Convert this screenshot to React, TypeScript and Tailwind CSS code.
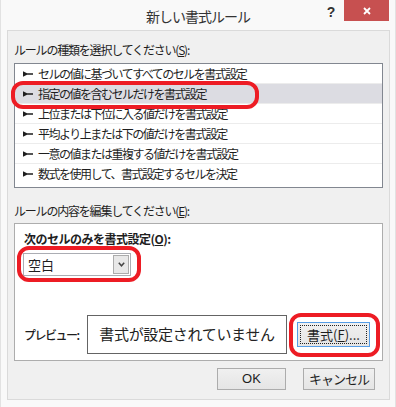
import React from 'react';

const rules = [
  'セルの値に基づいてすべてのセルを書式設定',
  '指定の値を含むセルだけを書式設定',
  '上位または下位に入る値だけを書式設定',
  '平均より上または下の値だけを書式設定',
  '一意の値または重複する値だけを書式設定',
  '数式を使用して、書式設定するセルを決定',
];

function RuleArrow() {
  return (
    <svg width="10" height="6" viewBox="0 0 10 6" className="shrink-0">
      <polygon points="0,0.3 4,2.2 10,2.2 10,3.8 4,3.8 0,5.7" fill="#1e1e1e" />
    </svg>
  );
}

function Button({ children, className = '' }: { children: React.ReactNode; className?: string }) {
  return (
    <div
      className={`flex items-center justify-center border border-[#acacac] bg-gradient-to-b from-[#f0f0f0] to-[#e5e5e5] text-[13px] ${className}`}
    >
      {children}
    </div>
  );
}

export default function App() {
  return (
    <div className="relative w-[396px] h-[407px] overflow-hidden bg-[#f9f9f9] border-x border-[#e2e2e2] font-['Noto_Sans_CJK_JP',sans-serif] text-[#1e1e1e]">
      {/* Title bar */}
      <div className="relative h-[30px] flex items-center justify-center">
        <span className="text-[14px] tracking-[-1px] text-[#333] leading-none mt-[1px]">新しい書式ルール</span>
        <div className="absolute top-0 right-[6px] flex items-start">
          <span className="w-[22px] mt-[4px] mr-[2px] text-center text-[14px] font-bold leading-[16px] text-[#333] font-['Liberation_Sans',sans-serif]">
            ?
          </span>
          <div className="w-[45px] h-[21px] bg-[#c75050] flex items-center justify-center">
            <svg width="8" height="8" viewBox="0 0 8 8">
              <path d="M1 1 L7 7 M7 1 L1 7" stroke="#fff" strokeWidth="1.8" />
            </svg>
          </div>
        </div>
      </div>

      {/* Content area */}
      <div className="ml-[6px] w-[383px] h-[370px] border border-[#dadada] bg-[#f0f0f0] px-[6px]">
        <div className="mt-[11px] h-[16px] leading-[16px] text-[12px] tracking-[-1.2px]">
          ルールの種類を選択してください(<span className="underline">S</span>):
        </div>

        {/* Rule type list */}
        <div className="mt-[5px] h-[125px] border border-[#828790] bg-white">
          {rules.map((r, i) => (
            <div
              key={r}
              className={`h-[20px] flex items-center gap-[5px] pl-[8px] text-[12px] tracking-[-1.5px] leading-none ${
                i === 1 ? 'bg-[#dcdce2]' : ''
              } ${i < rules.length - 1 ? 'border-b border-[#ececec]' : ''}`}
            >
              <RuleArrow />
              <span>{r}</span>
            </div>
          ))}
        </div>

        <div className="mt-[15px] h-[16px] leading-[16px] text-[12px] tracking-[-1.2px]">
          ルールの内容を編集してください(<span className="underline">E</span>):
        </div>

        {/* Rule description panel */}
        <div className="mt-[4px] h-[138px] border border-[#adadad] bg-white px-[9px]">
          <div className="mt-[7px] h-[16px] leading-[16px] text-[12px] font-bold tracking-[-0.5px]">
            次のセルのみを書式設定(<span className="underline">O</span>):
          </div>
          <div className="mt-[6px] -ml-[1px] w-[108px] h-[23px] border border-[#abadb3] bg-white flex items-center justify-between pl-[4px] pr-[1px]">
            <span className="text-[13px] leading-none">空白</span>
            <div className="w-[16px] h-[19px] border border-[#acacac] bg-[#e8e8e8] flex items-center justify-center">
              <svg width="7" height="5" viewBox="0 0 7 5">
                <path d="M0.8 0.8 L3.5 3.8 L6.2 0.8" stroke="#444" strokeWidth="1.5" fill="none" />
              </svg>
            </div>
          </div>

          <div className="mt-[39px] h-[39px] flex items-center">
            <span className="w-[63px] text-[12px] tracking-[-1.5px] font-medium">プレビュー:</span>
            <div className="w-[200px] h-[39px] border border-[#646464] bg-white flex items-center justify-center text-[15px] tracking-[-0.3px] text-[#222]">
              書式が設定されていません
            </div>
            <div className="ml-[10px] w-[73px] h-[25px] border border-[#569de5] bg-gradient-to-b from-[#f0f0f0] to-[#e5e5e5] p-[2px]">
              <div className="h-full border border-dotted border-[#222] flex items-center justify-center text-[13px] leading-none">
                書式(<span className="underline">F</span>)...
              </div>
            </div>
          </div>
        </div>

        {/* Dialog buttons */}
        <div className="mt-[7px] flex justify-end gap-[17px] pr-[8px]">
          <Button className="w-[69px] h-[22px] font-['Liberation_Sans',sans-serif]">OK</Button>
          <Button className="w-[72px] h-[22px] tracking-[-1px]">キャンセル</Button>
        </div>
      </div>

      {/* Red annotation outlines */}
      <div className="absolute left-[10px] top-[81px] w-[248px] h-[28px] border-[4px] border-[#ed1c24] rounded-[12px]" />
      <div className="absolute left-[16px] top-[246px] w-[124px] h-[36px] border-[4px] border-[#ed1c24] rounded-[12px]" />
      <div className="absolute left-[288px] top-[313px] w-[91px] h-[44px] border-[4px] border-[#ed1c24] rounded-[12px]" />
    </div>
  );
}
